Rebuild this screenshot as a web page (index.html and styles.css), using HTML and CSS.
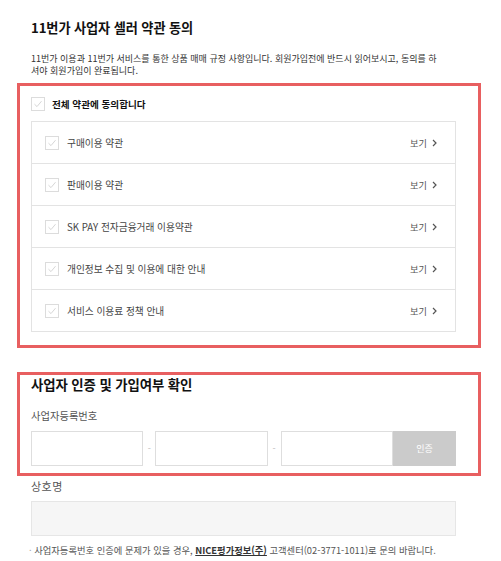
FILE: index.html
```html
<!DOCTYPE html>
<html lang="ko">
<head>
<meta charset="utf-8">
<title>11번가 사업자 셀러 약관 동의</title>
<link rel="stylesheet" href="styles.css">
</head>
<body>
<div class="page">
  <div class="inner">
    <h1 class="title">11번가 사업자 셀러 약관 동의</h1>
    <p class="desc">11번가 이용과 11번가 서비스를 통한 상품 매매 규정 사항입니다. 회원가입전에 반드시 읽어보시고, 동의를 하<br>셔야 회원가입이 완료됩니다.</p>
  </div>

  <section class="box terms">
    <label class="all-row">
      <span class="chk"><svg viewBox="0 0 14 14" width="14" height="14"><polyline points="3.5,7.2 6,9.6 10.5,4.2" fill="none" stroke="#d6d6d6" stroke-width="1"/></svg></span>
      <span class="all-text">전체 약관에 동의합니다</span>
    </label>
    <ul class="list">
      <li class="row"><span class="chk"><svg viewBox="0 0 14 14" width="14" height="14"><polyline points="3.5,7.2 6,9.6 10.5,4.2" fill="none" stroke="#d6d6d6" stroke-width="1"/></svg></span><span class="row-text">구매이용 약관</span><span class="view">보기 <svg class="chev" viewBox="0 0 5 8" width="5" height="8"><polyline points="1,1 4,4 1,7" fill="none" stroke="#555" stroke-width="1.2"/></svg></span></li>
      <li class="row"><span class="chk"><svg viewBox="0 0 14 14" width="14" height="14"><polyline points="3.5,7.2 6,9.6 10.5,4.2" fill="none" stroke="#d6d6d6" stroke-width="1"/></svg></span><span class="row-text">판매이용 약관</span><span class="view">보기 <svg class="chev" viewBox="0 0 5 8" width="5" height="8"><polyline points="1,1 4,4 1,7" fill="none" stroke="#555" stroke-width="1.2"/></svg></span></li>
      <li class="row"><span class="chk"><svg viewBox="0 0 14 14" width="14" height="14"><polyline points="3.5,7.2 6,9.6 10.5,4.2" fill="none" stroke="#d6d6d6" stroke-width="1"/></svg></span><span class="row-text">SK PAY 전자금융거래 이용약관</span><span class="view">보기 <svg class="chev" viewBox="0 0 5 8" width="5" height="8"><polyline points="1,1 4,4 1,7" fill="none" stroke="#555" stroke-width="1.2"/></svg></span></li>
      <li class="row"><span class="chk"><svg viewBox="0 0 14 14" width="14" height="14"><polyline points="3.5,7.2 6,9.6 10.5,4.2" fill="none" stroke="#d6d6d6" stroke-width="1"/></svg></span><span class="row-text">개인정보 수집 및 이용에 대한 안내</span><span class="view">보기 <svg class="chev" viewBox="0 0 5 8" width="5" height="8"><polyline points="1,1 4,4 1,7" fill="none" stroke="#555" stroke-width="1.2"/></svg></span></li>
      <li class="row"><span class="chk"><svg viewBox="0 0 14 14" width="14" height="14"><polyline points="3.5,7.2 6,9.6 10.5,4.2" fill="none" stroke="#d6d6d6" stroke-width="1"/></svg></span><span class="row-text">서비스 이용료 정책 안내</span><span class="view">보기 <svg class="chev" viewBox="0 0 5 8" width="5" height="8"><polyline points="1,1 4,4 1,7" fill="none" stroke="#555" stroke-width="1.2"/></svg></span></li>
    </ul>
  </section>

  <section class="box auth">
    <h2 class="sub-title">사업자 인증 및 가입여부 확인</h2>
    <div class="label">사업자등록번호</div>
    <div class="biz-row">
      <span class="field"></span>
      <span class="dash">-</span>
      <span class="field"></span>
      <span class="dash">-</span>
      <span class="field"></span>
      <button class="btn" type="button">인증</button>
    </div>
  </section>

  <div class="inner">
    <div class="label label-name">상호명</div>
    <div class="field field-name"></div>
    <p class="note"><span class="dot">·</span> 사업자등록번호 인증에 문제가 있을 경우, <b class="nice">NICE평가정보(주)</b> 고객센터(02-3771-1011)로 문의 바랍니다.</p>
  </div>
</div>
</body>
</html>
```

FILE: styles.css
```css
* { box-sizing: border-box; }
html, body { margin: 0; padding: 0; background: #fff; }
body {
  font-family: "Noto Sans CJK KR", "Noto Sans", sans-serif;
  color: #222;
}
.page {
  width: 501px;
  padding: 0 20px 0 17px;
}
.inner {
  padding: 0 25px 0 14px;
}
.title {
  margin: 20px 0 0;
  font-size: 13.2px;
  line-height: 16px;
  font-weight: 700;
  color: #111;
  letter-spacing: -0.1px;
}
.desc {
  margin: 17px 0 0;
  font-size: 9px;
  line-height: 12px;
  color: #333;
}
.box {
  border: 3px solid #e85f60;
  padding: 0 22px 0 11px;
}
.terms {
  margin-top: 6px;
  padding-bottom: 13px;
}
.all-row {
  display: flex;
  align-items: center;
  gap: 7px;
  height: 35px;
}
.chk {
  display: block;
  width: 14px;
  height: 14px;
  border: 1px solid #dcdcdc;
  background: #fff;
  flex: none;
}
.chk svg { display: block; margin: -1px; }
.all-text {
  font-size: 9.6px;
  font-weight: 700;
  color: #111;
}
.list {
  list-style: none;
  margin: 0;
  padding: 0;
  border: 1px solid #e3e3e3;
}
.row {
  display: flex;
  align-items: center;
  height: 42px;
  padding: 0 18px 0 13px;
  border-top: 1px solid #e3e3e3;
}
.row:first-child { border-top: 0; height: 41px; }
.row .chk { margin-right: 8px; }
.row-text {
  flex: 1;
  font-size: 9.7px;
  color: #444;
}
.view {
  display: flex;
  align-items: center;
  gap: 5px;
  font-size: 9.2px;
  color: #555;
}
.chev { display: block; }
.auth {
  margin-top: 24px;
  padding-top: 1px;
  padding-bottom: 7px;
}
.sub-title {
  margin: 0;
  font-size: 13.4px;
  line-height: 16px;
  font-weight: 700;
  color: #111;
  letter-spacing: -0.1px;
}
.label {
  margin-top: 17px;
  font-size: 10.3px;
  line-height: 14px;
  color: #555;
}
.biz-row {
  display: grid;
  grid-template-columns: 1fr 12px 1fr 13px 1fr 63px;
  height: 35px;
  margin-top: 8px;
}
.field {
  display: block;
  border: 1px solid #dedede;
  background: #fff;
}
.dash {
  display: flex;
  align-items: center;
  justify-content: center;
  font-size: 9px;
  color: #bbb;
}
.btn {
  border: 0;
  margin: 0;
  background: #cbcbcb;
  color: #fff;
  font-family: inherit;
  font-size: 9px;
}
.label-name {
  margin-top: 3px;
  font-size: 11px;
  letter-spacing: 0.5px;
}
.field-name {
  height: 35px;
  margin-top: 8px;
  background: #f6f6f6;
  border: 1px solid #e6e6e6;
}
.note {
  margin: 8px 0 0 -2px;
  font-size: 9.3px;
  line-height: 13px;
  color: #555;
}
.dot { color: #999; }
.nice {
  font-weight: 700;
  color: #333;
  text-decoration: underline;
}
```
